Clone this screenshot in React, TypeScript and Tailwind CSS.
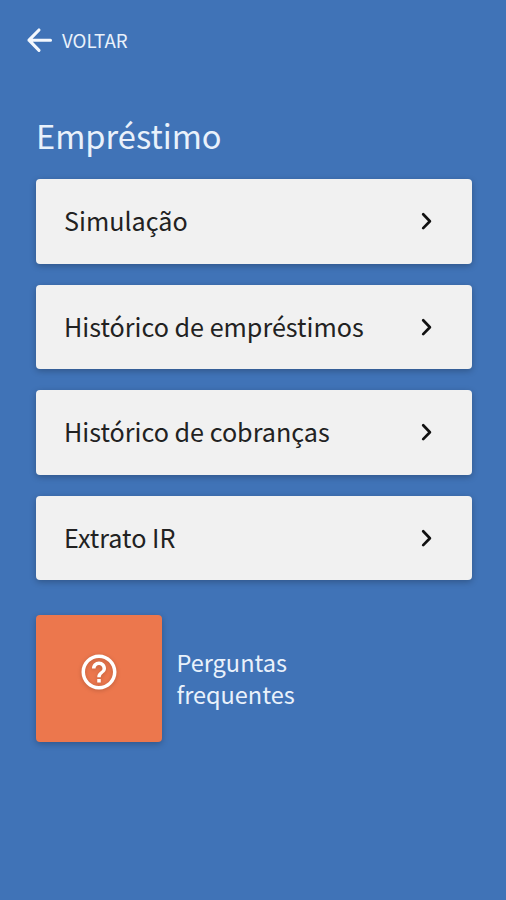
const items = ['Simulação', 'Histórico de empréstimos', 'Histórico de cobranças', 'Extrato IR'];

export default function App() {
  return (
    <main className="h-[900px] w-[506px] overflow-hidden bg-[#4073b7] font-['Noto_Sans_CJK_SC','Noto_Sans',sans-serif] text-[#e9f1fb]">
      <header className="flex h-20 items-center pl-[23px]">
        <svg className="size-8" viewBox="0 0 32 32" fill="none" stroke="#f4f8fd" strokeWidth="3.1" strokeLinecap="round" strokeLinejoin="round"><path d="M27.5 16.2H6M16 6 6 16.2 16 26.4" /></svg>
        <span className="mb-px ml-[7px] text-[18.7px] leading-6">VOLTAR</span>
      </header>
      <h1 className="ml-9 mt-[34px] h-[65px] text-[32.6px] leading-[42px]">Empréstimo</h1>
      <nav className="ml-9 flex w-[436px] flex-col gap-[21px] text-[#222]">
        {items.map((label) => (
          <button key={label} className="flex h-[84.5px] items-center justify-between rounded-[4px] bg-[#f1f1f1] pl-7 pr-[29px] text-left text-[25.15px] shadow-[0_2px_6px_rgba(0,0,0,0.25)]">
            <span>{label}</span>
            <svg className="size-8" viewBox="0 0 32 32" fill="none" stroke="#111" strokeWidth="2.7" strokeLinecap="round" strokeLinejoin="round"><path d="m12.2 9.3 6.7 6.9-6.7 6.9" /></svg>
          </button>
        ))}
      </nav>
      <div className="ml-9 mt-[35px] flex items-center gap-[14.5px]">
        <button className="flex h-[126.5px] w-[126px] items-center justify-center rounded-[4px] bg-[#ec774d] pb-3 text-white shadow-[0_2px_6px_rgba(0,0,0,0.25)]">
          <svg className="size-[42px] drop-shadow-[0_1px_2px_rgba(0,0,0,0.2)]" viewBox="0 0 24 24" fill="currentColor"><path d="M11 18h2v-2h-2v2zm1-16C6.48 2 2 6.48 2 12s4.48 10 10 10 10-4.48 10-10S17.52 2 12 2zm0 18c-4.41 0-8-3.59-8-8s3.59-8 8-8 8 3.59 8 8-3.59 8-8 8zm0-14c-2.21 0-4 1.79-4 4h2c0-1.1.9-2 2-2s2 .9 2 2c0 2-3 1.75-3 5h2c0-2.25 3-2.5 3-5 0-2.21-1.79-4-4-4z" /></svg>
        </button>
        <p className="mb-px text-[23.5px] leading-8">Perguntas<br />frequentes</p>
      </div>
    </main>
  );
}
